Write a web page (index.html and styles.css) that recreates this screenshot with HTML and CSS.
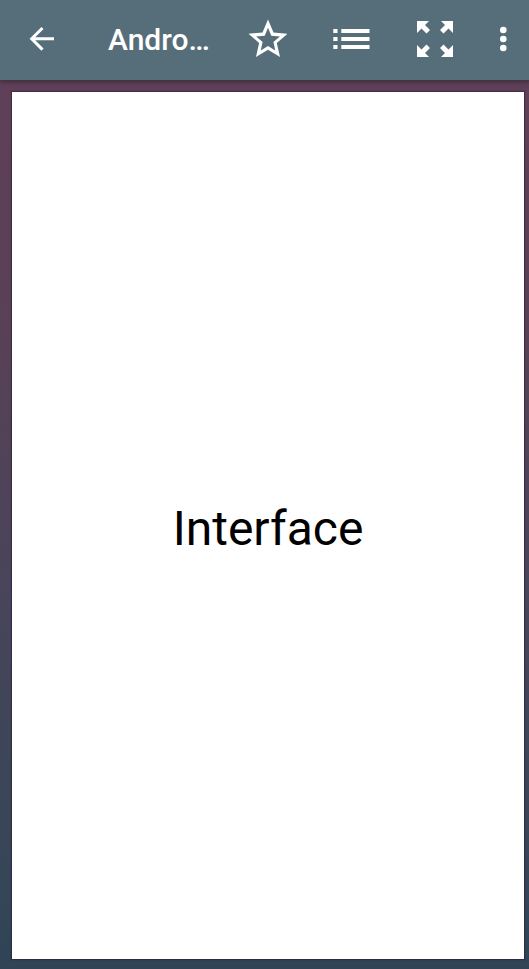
FILE: index.html
```html
<!DOCTYPE html>
<html lang="en">
<head>
<meta charset="utf-8">
<meta name="viewport" content="width=device-width, initial-scale=1">
<title>Andro…</title>
<link rel="stylesheet" href="styles.css">
</head>
<body>
<header class="toolbar">
  <button class="tool" type="button" aria-label="Back">
    <svg class="icon" viewBox="0 0 40 40"><path d="M20.5 9 9.700 19.800l10.800 10.800M10 19.800H32" fill="none" stroke="currentColor" stroke-width="3"/></svg>
  </button>
  <h1 class="title">Andro…</h1>
  <button class="tool" type="button" aria-label="Favourite">
    <svg class="icon" viewBox="-1 0 40 40"><path fill-rule="evenodd" d="M39.5 14.7 25.5 13.5 20 .5l-5.500 13L.5 14.700l10.600 9.300L8 38l12-7.300L32 38l-3.200-14zM20 27l-7.300 4.500 1.900-8.400-6.500-5.700 8.600-.7L20 8.700l3.300 8 8.600.7-6.500 5.700 1.900 8.400z"/></svg>
  </button>
  <button class="tool" type="button" aria-label="Contents">
    <svg class="icon" viewBox="0 0 40 40"><path d="M2.300 10h4.200v4H2.300zm8 0h28.200v4H10.300zM2.300 18h4.200v4H2.300zm8 0h28.200v4H10.300zM2.300 26h4.200v4H2.300zm8 0h28.200v4H10.300z"/></svg>
  </button>
  <button class="tool" type="button" aria-label="Full screen">
    <svg class="icon" viewBox="0 0 40 40"><path d="M2 2h12l-4 4 5 5-3.500 3.500-5-5L2 14zM38 2H26l4 4-5 5 3.500 3.500 5-5L38 14zM2 38h12l-4-4 5-5-3.500-3.500-5 5L2 26zM38 38H26l4-4-5-5 3.500-3.500 5 5L38 26z"/></svg>
  </button>
  <button class="tool tool-more" type="button" aria-label="More options">
    <svg class="icon" viewBox="0 0 40 40"><circle cx="20.300" cy="11" r="3.300"/><circle cx="20.300" cy="20" r="3.300"/><circle cx="20.300" cy="29" r="3.300"/></svg>
  </button>
</header>
<main class="viewer">
  <article class="page">
    <p class="word">Interface</p>
  </article>
</main>
</body>
</html>
```
FILE: styles.css
```css
* {
  box-sizing: border-box;
}

body {
  display: flex;
  flex-direction: column;
  min-height: 100vh;
  margin: 0;
  font-family: Roboto, "Liberation Sans", sans-serif;
  background: linear-gradient(#5f4058 80px, #5a4056 30%, #48455a 62%, #344657 92%, #304456);
}

.toolbar {
  display: flex;
  align-items: center;
  height: 80px;
  color: #fff;
  background: #566e7a;
  box-shadow: 0 1px 4px 1px rgba(40, 35, 40, 0.6);
}

.tool {
  display: flex;
  flex: 0 0 84px;
  align-items: center;
  justify-content: center;
  height: 78px;
  margin-bottom: 2px;
  padding: 0;
  border: 0;
  color: inherit;
  background: none;
}

.tool-more {
  flex-basis: 52px;
}

.icon {
  width: 40px;
  height: 40px;
  fill: currentColor;
}

.title {
  flex: 1;
  min-width: 0;
  margin: 0;
  padding-left: 24px;
  overflow: hidden;
  font-size: 30px;
  font-weight: 500;
  line-height: 40px;
  white-space: nowrap;
}

.viewer {
  display: flex;
  flex: 1;
  padding: 12px 5px 10px 12px;
}

.page {
  display: flex;
  flex: 1;
  align-items: center;
  justify-content: center;
  padding-top: 6px;
  background: #fff;
  box-shadow: 0 0 1px 1px rgba(40, 20, 50, 0.5);
}

.word {
  margin: 0;
  color: #000;
  font-size: 48px;
  line-height: 56px;
}
```
